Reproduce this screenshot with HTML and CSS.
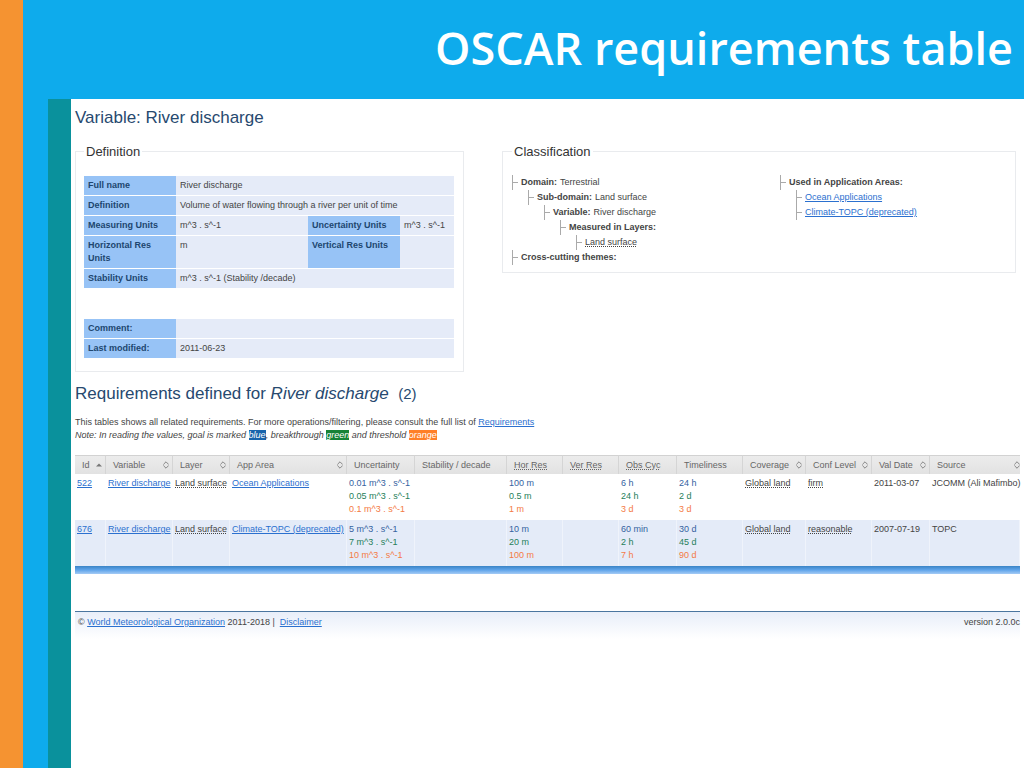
FILE: index.html
```html
<!DOCTYPE html>
<html lang="en">
<head>
<meta charset="utf-8">
<title>OSCAR requirements table</title>
<link rel="stylesheet" href="styles.css">
</head>
<body>
<svg class="defs" width="0" height="0" aria-hidden="true">
  <symbol id="sort" viewBox="0 0 6 8"><path d="M.6 3.200 3 .8 5.400 3.200M.6 4.800 3 7.200 5.400 4.800M.6 3.200V3.500M5.400 3.200V3.500M.6 4.800V4.500M5.400 4.800V4.500" fill="none" stroke="#7c7c7c" stroke-width=".9"/></symbol>
  <symbol id="asc" viewBox="0 0 6 8"><path d="M0 5.500 3 2.500 6 5.500z" fill="#777"/></symbol>
</svg>
<div class="slide">
  <header class="banner"><h1>OSCAR requirements table</h1></header>
  <div class="body">
    <main class="page">
      <h2>Variable: River discharge</h2>
      <div class="panels">
        <fieldset class="panel definition">
          <legend>Definition</legend>
          <table class="facts">
            <colgroup><col class="f-label"><col class="f-value"><col class="f-label"><col></colgroup>
            <tr><th scope="row">Full name</th><td colspan="3">River discharge</td></tr>
            <tr><th scope="row">Definition</th><td colspan="3">Volume of water flowing through a river per unit of time</td></tr>
            <tr><th scope="row">Measuring Units</th><td>m^3 . s^-1</td><th scope="row">Uncertainty Units</th><td>m^3 . s^-1</td></tr>
            <tr><th scope="row">Horizontal Res Units</th><td>m</td><th scope="row">Vertical Res Units</th><td></td></tr>
            <tr><th scope="row">Stability Units</th><td>m^3 . s^-1 (Stability /decade)</td><td></td><td></td></tr>
          </table>
          <table class="facts">
            <colgroup><col class="f-label"><col></colgroup>
            <tr><th scope="row">Comment:</th><td></td></tr>
            <tr><th scope="row">Last modified:</th><td>2011-06-23</td></tr>
          </table>
        </fieldset>
        <fieldset class="panel classification">
          <legend>Classification</legend>
          <div class="trees">
            <ul class="tree">
              <li><span class="node"><b>Domain:</b> Terrestrial</span>
                <ul><li><span class="node"><b>Sub-domain:</b> Land surface</span>
                  <ul><li><span class="node"><b>Variable:</b> River discharge</span>
                    <ul><li><span class="node"><b>Measured in Layers:</b></span>
                      <ul><li><span class="node"><abbr title="Land surface">Land surface</abbr></span></li></ul>
                    </li></ul>
                  </li></ul>
                </li></ul>
              </li>
              <li><span class="node"><b>Cross-cutting themes:</b></span></li>
            </ul>
            <ul class="tree">
              <li><span class="node"><b>Used in Application Areas:</b></span>
                <ul>
                  <li><span class="node"><a href="#">Ocean Applications</a></span></li>
                  <li><span class="node"><a href="#">Climate-TOPC (deprecated)</a></span></li>
                </ul>
              </li>
            </ul>
          </div>
        </fieldset>
      </div>
      <h2>Requirements defined for <em>River discharge</em>&nbsp; <small>(2)</small></h2>
      <p class="intro">This tables shows all related requirements. For more operations/filtering, please consult the full list of <a href="#">Requirements</a><br>
      <i>Note: In reading the values, goal is marked <mark class="m-goal">blue</mark>, breakthrough <mark class="m-break">green</mark> and threshold <mark class="m-thresh">orange</mark></i></p>
      <table class="reqs">
        <colgroup><col class="c-id"><col class="c-var"><col class="c-layer"><col class="c-app"><col class="c-unc"><col class="c-stab"><col class="c-res"><col class="c-res"><col class="c-obs"><col class="c-time"><col class="c-cov"><col class="c-conf"><col class="c-date"><col></colgroup>
        <thead><tr>
          <th><button>Id <svg><use href="#asc"/></svg></button></th>
          <th><button>Variable <svg><use href="#sort"/></svg></button></th>
          <th><button>Layer <svg><use href="#sort"/></svg></button></th>
          <th><button>App Area <svg><use href="#sort"/></svg></button></th>
          <th>Uncertainty</th>
          <th>Stability / decade</th>
          <th><abbr title="Horizontal resolution">Hor Res</abbr></th>
          <th><abbr title="Vertical resolution">Ver Res</abbr></th>
          <th><abbr title="Observing cycle">Obs Cyc</abbr></th>
          <th>Timeliness</th>
          <th><button>Coverage <svg><use href="#sort"/></svg></button></th>
          <th><button>Conf Level <svg><use href="#sort"/></svg></button></th>
          <th><button>Val Date <svg><use href="#sort"/></svg></button></th>
          <th class="last"><button>Source <svg><use href="#sort"/></svg></button></th>
        </tr></thead>
        <tbody>
          <tr>
            <td><a href="#">522</a></td><td><a href="#">River discharge</a></td><td><abbr title="Land surface">Land surface</abbr></td><td><a href="#">Ocean Applications</a></td>
            <td><div class="goal">0.01 m^3 . s^-1</div><div class="brk">0.05 m^3 . s^-1</div><div class="thr">0.1 m^3 . s^-1</div></td>
            <td></td>
            <td><div class="goal">100 m</div><div class="brk">0.5 m</div><div class="thr">1 m</div></td>
            <td></td>
            <td><div class="goal">6 h</div><div class="brk">24 h</div><div class="thr">3 d</div></td>
            <td><div class="goal">24 h</div><div class="brk">2 d</div><div class="thr">3 d</div></td>
            <td><abbr title="Global land">Global land</abbr></td><td><abbr title="firm">firm</abbr></td><td>2011-03-07</td><td>JCOMM (Ali Mafimbo)</td>
          </tr>
          <tr>
            <td><a href="#">676</a></td><td><a href="#">River discharge</a></td><td><abbr title="Land surface">Land surface</abbr></td><td><a href="#">Climate-TOPC (deprecated)</a></td>
            <td><div class="goal">5 m^3 . s^-1</div><div class="brk">7 m^3 . s^-1</div><div class="thr">10 m^3 . s^-1</div></td>
            <td></td>
            <td><div class="goal">10 m</div><div class="brk">20 m</div><div class="thr">100 m</div></td>
            <td></td>
            <td><div class="goal">60 min</div><div class="brk">2 h</div><div class="thr">7 h</div></td>
            <td><div class="goal">30 d</div><div class="brk">45 d</div><div class="thr">90 d</div></td>
            <td><abbr title="Global land">Global land</abbr></td><td><abbr title="reasonable">reasonable</abbr></td><td>2007-07-19</td><td>TOPC</td>
          </tr>
        </tbody>
      </table>
      <div class="bar"></div>
      <footer class="foot">
        <span>© <a href="#">World Meteorological Organization</a> 2011-2018 |&nbsp; <a href="#">Disclaimer</a></span>
        <span>version 2.0.0c</span>
      </footer>
    </main>
  </div>
</div>
</body>
</html>
```
FILE: styles.css
```css
* { box-sizing: border-box; }
body { margin: 0; font: 9px/13px "Liberation Sans", Arial, sans-serif; color: #444; }
.defs { position: absolute; }
.slide { min-height: 100vh; display: flex; flex-direction: column; background: #0eabec; border-left: 23px solid #f59331; }
.banner { height: 99px; padding: 16px 11px 0 0; text-align: right; }
.banner h1 { margin: 0; font: 600 45px/64px "Open Sans", "Noto Sans", sans-serif; color: #fff; white-space: nowrap; }
.body { flex: 1; display: flex; margin-left: 25px; border-left: 23px solid #0a919c; background: #fff; }
.page { flex: 1; min-width: 0; padding: 8px 4px 0; overflow: hidden; }
h2 { margin: 0; font-size: 17px; line-height: 21px; font-weight: normal; color: #27496f; }
h2 small { font-size: 15px; }
a { color: #2b70cf; }
abbr { text-decoration: underline dotted; }

.panels { display: grid; grid-template-columns: 389fr 514fr; align-items: start; gap: 38px; margin: 16px 4px 11px 0; }
.panel { margin: 0; min-width: 0; border: 1px solid #e9ebee; }
.definition { padding: 17px 9px 12px 8px; }
.classification { padding: 16px 9px 7px; }
legend { padding: 0 2px; font-size: 13px; line-height: 15px; color: #333; }
.facts { width: 100%; border-spacing: 0; table-layout: fixed; }
.facts + .facts { margin-top: 30px; }
.f-label { width: 92px; }
.f-value { width: 132px; }
.facts th, .facts td { height: 20px; padding: 3px 4px; text-align: left; vertical-align: top; border-bottom: 1px solid #fff; background: #e5ebf8; white-space: nowrap; }
.facts th { background: #97c3f6; color: #20466f; white-space: normal; }

.trees { display: grid; grid-template-columns: 268px 1fr; }
.tree, .tree ul { margin: 0; padding: 0; list-style: none; }
.tree ul { padding-left: 16px; }
.node { display: flex; align-items: center; gap: 3px; height: 15px; border-left: 1px solid #aaa; white-space: nowrap; }
.node::before { content: ""; width: 5px; border-top: 1px solid #aaa; }

.intro { margin: 12px 0 13px; }
mark { color: #fff; }
.m-goal { background: #1763ab; }
.m-break { background: #178236; }
.m-thresh { background: #ff7f27; }

.reqs { width: 100%; border-spacing: 0; table-layout: fixed; }
.c-id { width: 31px; }
.c-var { width: 67px; }
.c-layer { width: 57px; }
.c-app { width: 117px; }
.c-unc { width: 68px; }
.c-stab { width: 92px; }
.c-res { width: 56px; }
.c-obs { width: 58px; }
.c-time { width: 66px; }
.c-cov { width: 63px; }
.c-conf { width: 66px; }
.c-date { width: 58px; }
.reqs th { height: 19px; padding: 0 3px 0 7px; text-align: left; font-weight: normal; color: #666; background: linear-gradient(#ececec, #e2e2e2); border-top: 1px solid #d2d2d2; border-right: 1px solid #d5d5d5; white-space: nowrap; }
.reqs th.last { padding-right: 0; border-right: 0; }
.reqs button { display: flex; justify-content: space-between; align-items: center; width: 100%; padding: 0; border: 0; background: none; font: inherit; color: inherit; }
.reqs svg { width: 6px; height: 8px; flex: none; }
.reqs td { height: 46px; padding: 3px 2px 4px; vertical-align: top; white-space: nowrap; }
.reqs tbody tr:nth-child(2) td { background: #e4ebf8; border-right: 1px solid #eff3fb; }
.goal { color: #35629f; }
.brk { color: #26805a; }
.thr { color: #f47a45; }
.bar { height: 8px; background: linear-gradient(#3a84c6, #5fa4ea 50%, #a5cbf5); }
.foot { display: flex; justify-content: space-between; height: 28px; margin-top: 37px; padding: 4px 0 0 3px; border-top: 1px solid #4a759f; background: linear-gradient(#e8eef9, #fff); white-space: nowrap; }
```
